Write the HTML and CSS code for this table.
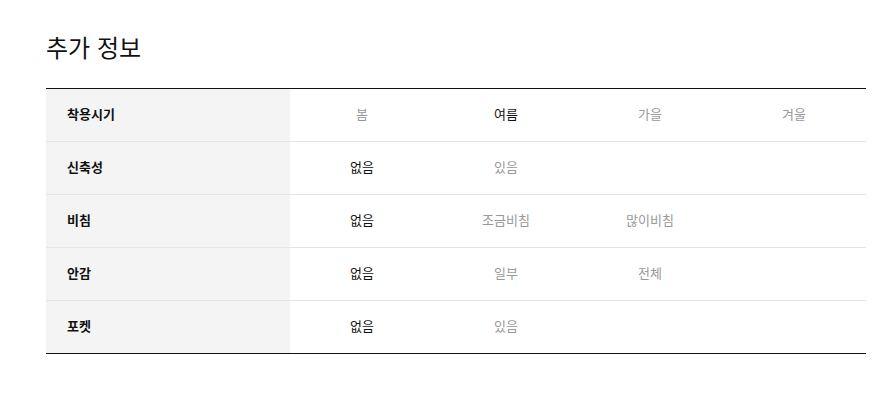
FILE: index.html
```html
<!doctype html>
<html lang="ko">
  <head>
    <meta charset="UTF-8" />
    <meta name="viewport" content="width=device-width, initial-scale=1.0" />
    <title>추가 정보</title>
    <link rel="stylesheet" href="styles.css">
  </head>
  <body>
    <main class="content">
      <h2 class="titulo">추가 정보</h2>
      <div class="info">
        <div class="fila">
          <div class="etiqueta">착용시기</div>
          <div class="valor">봄</div>
          <div class="valor on">여름</div>
          <div class="valor">가을</div>
          <div class="valor">겨울</div>
        </div>
        <div class="fila">
          <div class="etiqueta">신축성</div>
          <div class="valor on">없음</div>
          <div class="valor">있음</div>
          <div class="valor"></div>
          <div class="valor"></div>
        </div>
        <div class="fila">
          <div class="etiqueta">비침</div>
          <div class="valor on">없음</div>
          <div class="valor">조금비침</div>
          <div class="valor">많이비침</div>
          <div class="valor"></div>
        </div>
        <div class="fila">
          <div class="etiqueta">안감</div>
          <div class="valor on">없음</div>
          <div class="valor">일부</div>
          <div class="valor">전체</div>
          <div class="valor"></div>
        </div>
        <div class="fila">
          <div class="etiqueta">포켓</div>
          <div class="valor on">없음</div>
          <div class="valor">있음</div>
          <div class="valor"></div>
          <div class="valor"></div>
        </div>
      </div>
    </main>
  </body>
</html>
```

FILE: styles.css
```css
body {
  margin: 0;
  background-color: #fff;
  font-family: "Noto Sans CJK KR", "Noto Sans", sans-serif;
  color: #111;
}

.content {
  padding: 30px 11px 0 46px;
  width: 820px;
}

.titulo {
  margin: 0 0 24px;
  font-size: 24px;
  line-height: 34px;
  font-weight: 400;
  color: #111;
}

.info {
  border-top: 1px solid #111;
  border-bottom: 1px solid #111;
}

.fila {
  display: grid;
  grid-template-columns: 244px repeat(4, 144px);
  height: 52px;
  align-items: center;
}

.fila + .fila {
  border-top: 1px solid #e5e5e5;
}

.etiqueta {
  box-sizing: border-box;
  height: 100%;
  display: flex;
  align-items: center;
  padding: 0 0 3px 21px;
  background-color: #f4f4f4;
  font-size: 13px;
  font-weight: 700;
  color: #111;
}

.valor {
  padding-bottom: 3px;
  text-align: center;
  font-size: 13px;
  color: #999;
}

.valor.on {
  color: #111;
}
```
